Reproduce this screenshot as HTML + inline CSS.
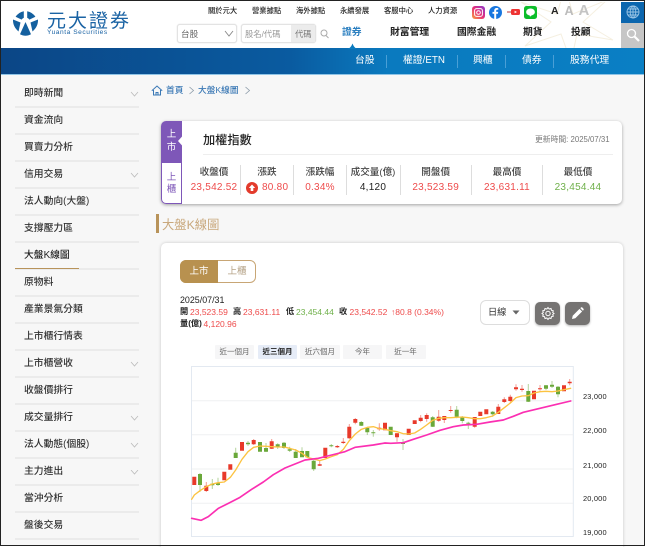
<!DOCTYPE html>
<html lang="zh-Hant">
<head>
<meta charset="utf-8">
<title>大盤K線圖</title>
<style>
html,body{margin:0;padding:0;background:#fff;width:646px;height:547px;overflow:hidden}
body{font-family:"Liberation Sans","Noto Sans CJK TC",sans-serif;color:#333;position:relative}
#p{position:absolute;left:0;top:0;width:646px;height:547px;overflow:hidden}
#p div,#p span.a,#p svg.a{position:absolute;white-space:nowrap}
.t{line-height:12px;transform:translateY(-6px)}
.c{transform:translate(-50%,-6px);line-height:12px;text-align:center}
.top{font-size:7.3px;color:#222;font-weight:500}
.nav{font-size:9.8px;color:#222;font-weight:700}
.sub{font-size:9.8px;color:#fff}
.sep{width:1px;height:13px;top:55px;background:#4a9fd6}
#p .side{font-size:9.8px;color:#333;left:24px;font-weight:500;transform:translateY(-5px)}
.ln{left:15px;width:124px;height:1.5px;background:#ebebeb}
.lab{font-size:9.6px;color:#444;font-weight:500}
.val{font-size:10px;color:#ee4b4b;letter-spacing:.25px}
.cs{width:1px;height:30px;top:165px;background:#ddd}
.m{font-size:8.5px;color:#ee4b4b}
.k{font-size:8.2px;color:#222;font-weight:700}
.rg{top:345px;height:14px;line-height:14px;background:#f6f6f7;text-align:center;font-size:7.5px;color:#666;border-radius:1px}
.ax{font-size:7.4px;color:#222;left:583px;letter-spacing:.2px}
</style>
</head>
<body>
<div id="p">
<div style="left:0;top:0;width:646px;height:48px;background:#fff"></div>
<svg class="a" style="left:515px;top:2px" width="100" height="46" viewBox="0 0 100 46"><path d="M50-15L58 12 92-2 68 20 98 38 62 32 56 60 46 32 10 44 36 20 6 0 42 12Z" fill="none" stroke="#f5efe0" stroke-width="1"/></svg>

<svg class="a" style="left:12px;top:10px" width="27" height="27" viewBox="0 0 27 27">
<path d="M11.8 1.2A12.5 12.5 0 0 0 3.6 6.8L9.6 9.6C10.2 8.8 11 8.2 11.8 7.9Z" fill="#14609f"/>
<path d="M15.2 1.2A12.5 12.5 0 0 1 23.4 6.8L17.4 9.6C16.8 8.8 16 8.2 15.2 7.9Z" fill="#14609f"/>
<path d="M1 9.5L8.5 12.5 6.5 21.5C2.5 18 .8 14 1 9.5Z" fill="#14609f"/>
<path d="M26 9.5L18.5 12.5 20.5 21.5C24.5 18 26.2 14 26 9.5Z" fill="#14609f"/>
<path d="M13.5 12L19 24.2C15.5 26.2 11.5 26.2 8 24.2Z" fill="#14609f"/>
</svg>
<div class="t" style="left:47px;top:20px;font-size:19px;letter-spacing:2px;color:#1a63a4;line-height:22px;transform:translateY(-11px);font-family:'Noto Sans CJK TC',sans-serif;font-weight:400">元大證券</div>
<div class="t" style="left:47px;top:32.500px;font-size:6.600px;color:#1a63a4;letter-spacing:.55px;font-family:'Liberation Sans',sans-serif">Yuanta Securities</div>

<div class="t top" style="left:208px;top:11px">關於元大</div>
<div class="t top" style="left:252px;top:11px">營業據點</div>
<div class="t top" style="left:296px;top:11px">海外據點</div>
<div class="t top" style="left:340px;top:11px">永續發展</div>
<div class="t top" style="left:384px;top:11px">客服中心</div>
<div class="t top" style="left:428px;top:11px">人力資源</div>

<svg class="a" style="left:472px;top:5.500px" width="13" height="13" viewBox="0 0 13 13"><defs><linearGradient id="ig" x1="0" y1="1" x2="1" y2="0"><stop offset="0" stop-color="#f9a13a"/><stop offset=".5" stop-color="#e62f7b"/><stop offset="1" stop-color="#8a3ad0"/></linearGradient></defs><rect width="13" height="13" rx="3" fill="url(#ig)"/><rect x="2.6" y="2.6" width="7.8" height="7.8" rx="2" fill="none" stroke="#fff" stroke-width="1"/><circle cx="6.5" cy="6.5" r="1.8" fill="none" stroke="#fff" stroke-width="1"/></svg>
<svg class="a" style="left:489px;top:5.500px" width="13" height="13" viewBox="0 0 13 13"><circle cx="6.5" cy="6.5" r="6.5" fill="#1877e0"/><path d="M7.2 13V7.8H8.9L9.2 5.9H7.2V4.8C7.2 4.2 7.5 3.8 8.2 3.8H9.3V2.2C8.8 2.1 8.2 2 7.8 2 6.2 2 5.2 3 5.2 4.6V5.9H3.5V7.8H5.2V13Z" fill="#fff"/></svg>
<svg class="a" style="left:507px;top:8px" width="13" height="8" viewBox="0 0 13 8"><rect x="0" y="3" width="5" height="2" fill="#d99"/><rect x="4" y="1" width="9" height="6" rx="1.6" fill="#e33"/><path d="M7.6 2.8L10 4 7.6 5.2Z" fill="#fff"/></svg>
<svg class="a" style="left:524px;top:5.500px" width="13" height="13" viewBox="0 0 13 13"><rect width="13" height="13" rx="2.5" fill="#0cbd2a"/><ellipse cx="6.5" cy="6" rx="4.4" ry="3.5" fill="#fff"/><path d="M5.5 9L6 10.8 8 9Z" fill="#fff"/></svg>
<div class="t" style="left:551px;top:11px;font-size:10.500px;font-weight:700;color:#222">A</div>
<div class="t" style="left:564.500px;top:11px;font-size:12.500px;font-weight:700;color:#bcbcbc">A</div>
<div class="t" style="left:578.500px;top:11px;font-size:15px;font-weight:700;color:#c4c4c4">A</div>

<div style="left:621px;top:2px;width:23px;height:21px;background:#0b66ae"></div>
<svg class="a" style="left:626px;top:5px" width="14" height="14" viewBox="0 0 14 14" fill="none" stroke="#9cc6e6" stroke-width=".9"><circle cx="7" cy="7" r="6"/><ellipse cx="7" cy="7" rx="2.8" ry="6"/><path d="M7 1V13M1 7H13M2 4H12M2 10H12"/></svg>
<div style="left:621px;top:23px;width:23px;height:25px;background:#c6c6c6"></div>
<svg class="a" style="left:626px;top:28px" width="14" height="15" viewBox="0 0 14 15" fill="none" stroke="#fff" stroke-width="1.3"><circle cx="5.5" cy="5.5" r="4"/><path d="M8.5 8.5L13 13" stroke-width="2.2"/></svg>

<div style="left:177px;top:24px;width:60px;height:19px;border:1px solid #e3e3e3;border-radius:3px;box-sizing:border-box;background:#fff;box-shadow:0 0 1px #ccc"></div>
<div class="t" style="left:181px;top:34px;font-size:8.6px;color:#666">台股</div>
<svg class="a" style="left:224px;top:30px" width="10" height="7" viewBox="0 0 10 7"><path d="M1 1L5 6 9 1" fill="none" stroke="#888" stroke-width=".9"/></svg>
<div style="left:241px;top:24px;width:75px;height:19px;border:1px solid #e3e3e3;border-radius:3px;box-sizing:border-box;background:#fff;box-shadow:0 0 1px #ccc"></div>
<div style="left:291px;top:25px;width:24px;height:17px;background:#ececec"></div>
<div class="t" style="left:245px;top:34px;font-size:8.3px;color:#999">股名/代碼</div>
<div class="t" style="left:295px;top:34px;font-size:8.3px;color:#777">代碼</div>
<svg class="a" style="left:320px;top:29px" width="9" height="10" viewBox="0 0 9 10" fill="none" stroke="#aaa"><circle cx="4" cy="4" r="3"/><path d="M6 6.5L8.5 9"/></svg>

<div class="t nav" style="left:342px;top:33px;color:#2b7fc0">證券</div>
<div class="t nav" style="left:390px;top:33px">財富管理</div>
<div class="t nav" style="left:457px;top:33px">國際金融</div>
<div class="t nav" style="left:523px;top:33px">期貨</div>
<div class="t nav" style="left:571px;top:33px">投顧</div>

<div style="left:1px;top:48px;width:644px;height:26px;background:linear-gradient(90deg,#0b4686 0%,#0a5ba0 45%,#0a7abf 60%,#0a7fc4 100%)"></div>
<svg class="a" style="left:346px;top:43px" width="13" height="6" viewBox="0 0 13 6"><path d="M1 6C4 5.5 5.5 3 6.5 .5 7.5 3 9 5.500 12 6Z" fill="#0a7abf"/></svg>
<div style="left:1px;top:74px;width:644px;height:1px;background:#8fc4e6"></div>
<div class="t sub" style="left:355px;top:61px">台股</div><div class="sep" style="left:386px"></div>
<div class="t sub" style="left:403px;top:61px">權證/ETN</div><div class="sep" style="left:457px"></div>
<div class="t sub" style="left:473px;top:61px">興櫃</div><div class="sep" style="left:505px"></div>
<div class="t sub" style="left:522px;top:61px">債券</div><div class="sep" style="left:553px"></div>
<div class="t sub" style="left:570px;top:61px">股務代理</div>

<div style="left:1px;top:75px;width:644px;height:471px;background:#f7f7f7"></div>

<svg class="a" style="left:151px;top:85px" width="12" height="11" viewBox="0 0 12 11" fill="none" stroke="#3a78b5" stroke-width="1"><path d="M.8 5.8L6 1 11.200 5.800M2.500 5V10H9.500V5M5 10V7.500H7V10"/></svg>
<div class="t" style="left:166px;top:90px;font-size:8.7px;color:#3a78b5;font-weight:500">首頁</div>
<svg class="a" style="left:188px;top:86px" width="7" height="9" viewBox="0 0 7 9"><path d="M1.500 1L5.500 4.500 1.500 8" fill="none" stroke="#8a9aa8" stroke-width=".8"/></svg>
<div class="t" style="left:198px;top:90px;font-size:8.7px;color:#3a78b5;font-weight:500">大盤K線圖</div>
<svg class="a" style="left:244px;top:86px" width="7" height="9" viewBox="0 0 7 9"><path d="M1.500 1L5.500 4.500 1.500 8" fill="none" stroke="#8a9aa8" stroke-width=".8"/></svg>

<div class="t side" style="top:93px">即時新聞</div><div class="ln" style="top:106px"></div>
<div class="t side" style="top:120px">資金流向</div><div class="ln" style="top:133px"></div>
<div class="t side" style="top:147px">買賣力分析</div><div class="ln" style="top:160px"></div>
<div class="t side" style="top:174px">信用交易</div><div class="ln" style="top:187px"></div>
<div class="t side" style="top:201px">法人動向(大盤)</div><div class="ln" style="top:214px"></div>
<div class="t side" style="top:228px">支撐壓力區</div><div class="ln" style="top:241px"></div>
<div class="t side" style="top:255px;color:#222">大盤K線圖</div><div class="ln" style="top:268px"></div><div style="left:15px;top:267.500px;width:64px;height:1px;background:#b8935a"></div>
<div class="t side" style="top:282px">原物料</div><div class="ln" style="top:295px"></div>
<div class="t side" style="top:309px">產業景氣分類</div><div class="ln" style="top:322px"></div>
<div class="t side" style="top:336px">上市櫃行情表</div><div class="ln" style="top:349px"></div>
<div class="t side" style="top:363px">上市櫃營收</div><div class="ln" style="top:376px"></div>
<div class="t side" style="top:390px">收盤價排行</div><div class="ln" style="top:403px"></div>
<div class="t side" style="top:417px">成交量排行</div><div class="ln" style="top:430px"></div>
<div class="t side" style="top:444px">法人動態(個股)</div><div class="ln" style="top:457px"></div>
<div class="t side" style="top:471px">主力進出</div><div class="ln" style="top:484px"></div>
<div class="t side" style="top:498px">當沖分析</div><div class="ln" style="top:511px"></div>
<div class="t side" style="top:525px">盤後交易</div><div class="ln" style="top:538px"></div>
<svg class="a" style="left:130px;top:90px" width="9" height="360" viewBox="0 0 9 360" fill="none" stroke="#bbb" stroke-width=".8"><path d="M1 2L4.500 6 8 2M1 83L4.500 87 8 83M1 272L4.500 276 8 272M1 326L4.500 330 8 326M1 353L4.500 357 8 353"/></svg>
<svg class="a" style="left:130px;top:470px" width="9" height="8" viewBox="0 0 9 8" fill="none" stroke="#bbb" stroke-width=".8"><path d="M1 0L4.500 4 8 0"/></svg>

<div style="left:161px;top:121px;width:461px;height:83px;background:#fff;border-radius:5px;box-shadow:0 1px 3px rgba(0,0,0,.35)"></div>
<div style="left:161px;top:121px;width:21px;height:42px;background:#7e57b8;border-radius:5px 0 0 0"></div>
<svg class="a" style="left:178px;top:136px" width="5" height="10" viewBox="0 0 5 10"><path d="M4.500 0V10L0 5Z" fill="#fff"/></svg>
<div style="left:161px;top:163px;width:21px;height:41px;box-sizing:border-box;border:1px solid #7e57b8;border-top:none;border-radius:0 0 0 5px;background:#fff"></div>
<div class="c" style="left:171.500px;top:135px;font-size:9.500px;color:#fff">上</div>
<div class="c" style="left:171.500px;top:148px;font-size:9.500px;color:#fff">市</div>
<div class="c" style="left:171.500px;top:178px;font-size:9.500px;color:#7e57b8">上</div>
<div class="c" style="left:171.500px;top:190px;font-size:9.500px;color:#7e57b8">櫃</div>
<div class="t" style="left:203px;top:140px;font-size:12.200px;color:#222;font-weight:500">加權指數</div>
<div class="t" style="left:535px;top:140px;font-size:7.800px;color:#777">更新時間: 2025/07/31</div>
<div style="left:203px;top:154px;width:410px;height:1px;background:#eee"></div>

<div class="c lab" style="left:214px;top:172.500px">收盤價</div><div class="c val" style="left:214px;top:188px">23,542.52</div>
<div class="cs" style="left:240px"></div>
<div class="c lab" style="left:267px;top:172.500px">漲跌</div>
<svg class="a" style="left:246px;top:182px" width="12" height="12" viewBox="0 0 12 12"><circle cx="6" cy="6" r="6" fill="#e33b2c"/><path d="M6 2.500L9.200 6H7.300V9H4.700V6H2.800Z" fill="#fff"/></svg>
<div class="t val" style="left:262px;top:188px">80.80</div>
<div class="cs" style="left:293px"></div>
<div class="c lab" style="left:320px;top:172.500px">漲跌幅</div><div class="c val" style="left:320px;top:188px">0.34%</div>
<div class="cs" style="left:346px"></div>
<div class="c lab" style="left:373px;top:172.500px">成交量(億)</div><div class="c val" style="left:373px;top:188px;color:#222">4,120</div>
<div class="cs" style="left:400px"></div>
<div class="c lab" style="left:435.700px;top:172.500px">開盤價</div><div class="c val" style="left:435.700px;top:188px">23,523.59</div>
<div class="cs" style="left:471px"></div>
<div class="c lab" style="left:507px;top:172.500px">最高價</div><div class="c val" style="left:507px;top:188px">23,631.11</div>
<div class="cs" style="left:542px"></div>
<div class="c lab" style="left:578px;top:172.500px">最低價</div><div class="c val" style="left:578px;top:188px;color:#6fb04a">23,454.44</div>

<div style="left:156px;top:214px;width:2.500px;height:19px;background:#b8935a"></div>
<div class="t" style="left:162px;top:223.500px;font-size:12.300px;color:#c9a87c;line-height:14px">大盤K線圖</div>

<div style="left:161px;top:243px;width:462px;height:310px;background:#fff;border-radius:5px;box-shadow:0 0 3px rgba(0,0,0,.2)"></div>

<div style="left:180px;top:260px;width:76px;height:23px;box-sizing:border-box;border:1px solid #c8a675;border-radius:6px;background:#fff"></div>
<div style="left:180px;top:260px;width:38px;height:23px;background:#b8914f;border-radius:6px 0 0 6px"></div>
<div class="c" style="left:199px;top:272px;font-size:9.500px;color:#fff">上市</div>
<div class="c" style="left:237px;top:272px;font-size:9.500px;color:#b5a286">上櫃</div>

<div class="t" style="left:180px;top:300px;font-size:8.900px;color:#222">2025/07/31</div>
<div class="t k" style="left:180px;top:312px">開</div><div class="t m" style="left:190px;top:312px">23,523.59</div>
<div class="t k" style="left:233px;top:312px">高</div><div class="t m" style="left:243px;top:312px">23,631.11</div>
<div class="t k" style="left:286px;top:312px">低</div><div class="t m" style="left:296px;top:312px;color:#6fb04a">23,454.44</div>
<div class="t k" style="left:339px;top:312px">收</div><div class="t m" style="left:349.500px;top:312px">23,542.52</div>
<div class="t m" style="left:391px;top:312px">↑80.8 (0.34%)</div>
<div class="t k" style="left:180px;top:324px">量(億)</div><div class="t m" style="left:203.500px;top:324px">4,120.96</div>

<div class="rg" style="left:215px;width:39px">近一個月</div>
<div class="rg" style="left:258px;width:39px;background:#e6ecf7;color:#222;font-weight:700">近三個月</div>
<div class="rg" style="left:300px;width:40px">近六個月</div>
<div class="rg" style="left:343px;width:39px">今年</div>
<div class="rg" style="left:385.500px;width:40px">近一年</div>

<div style="left:480px;top:300px;width:50px;height:25px;box-sizing:border-box;border:1px solid #ddd;border-radius:6px;background:#fff"></div>
<div class="t" style="left:488px;top:312px;font-size:9.200px;color:#333">日線</div>
<svg class="a" style="left:512px;top:310px" width="8" height="5" viewBox="0 0 8 5"><path d="M.5 .5H7.500L4 4.500Z" fill="#666"/></svg>
<div style="left:535px;top:302px;width:25px;height:23px;background:#757372;border-radius:5px;box-shadow:0 1px 2px rgba(0,0,0,.3)"></div>
<svg class="a" style="left:541px;top:306px" width="14" height="15" viewBox="0 0 14 14" fill="none" stroke="#fff" stroke-width="1"><path d="M7 1L8.200 2.500 10 2 10.500 3.800 12.300 4.300 11.700 6 13 7 11.700 8 12.300 9.700 10.500 10.200 10 12 8.200 11.500 7 13 5.800 11.500 4 12 3.500 10.200 1.700 9.700 2.300 8 1 7 2.300 6 1.700 4.300 3.500 3.800 4 2 5.800 2.500Z"/><circle cx="7" cy="7" r="2.200"/></svg>
<div style="left:565px;top:302px;width:25px;height:23px;background:#757372;border-radius:5px;box-shadow:0 1px 2px rgba(0,0,0,.3)"></div>
<svg class="a" style="left:571px;top:307px" width="13" height="13" viewBox="0 0 13 13"><path d="M1 12L1.700 8.700 8.500 1.900 11.100 4.500 4.300 11.300Z M9.300 1.100L10 .5C10.400.2 10.900.2 11.300.5L12.500 1.700C12.800 2.100 12.800 2.600 12.500 3L11.900 3.700Z" fill="#fff"/></svg>

<svg class="a" style="left:0;top:0" width="646" height="547" viewBox="0 0 646 547">
<rect x="191.500" y="366.500" width="381.800" height="170" fill="#fff" stroke="#e3e9f1" stroke-width="1"/>
<path d="M192 400.700H573M192 434.700H573M192 469H573M192 503.300H573" stroke="#eff0f2" stroke-width="1" fill="none"/>
<path fill="none" stroke="#e8392a" stroke-opacity=".5" stroke-width="1" d="M206.300 482V492M253.700 439V445M271.700 439V449M319.700 460V466M337.300 445V448M343.300 438V444M349.300 424V439M355.300 418V424.300M379.300 423.300V430.700M397 433V441.700M420.700 415V422.300M426.700 413.300V421.700M438.700 410V421.700M444.300 416V423M450.700 406V412.700M474.700 417V427.700M498.300 404V414M504.300 397.300V403M510.300 394.700V403.300M516 384.300V390.700M522 385V391.700M540 385V390.700M569.700 379V385.300"/>
<path fill="none" stroke="#6aa83a" stroke-opacity=".5" stroke-width="1" d="M200 473V492M212.300 479V489M218 477.700V486M235.700 447.700V458M248 441V446M266 443V452M277.700 443.300V449M284 442V449M289.700 446.700V452M295.700 449V458M302 447.300V457M307.300 451V458M313.700 460V471M331.300 444V447.300M361.300 421V426M367.300 428V435M373.300 430V436.700M403 439V450M432.700 416V427M456.700 406V418.300M462.300 416V423.300M468.300 421.700V429M492.700 411V416.700M528.300 384V402M546 385V390M552 381V388M558 386V397.300"/>
<path fill="none" stroke="#e8392a" stroke-width="4" d="M194.300 476.700V485M206.300 485.700V491M224.300 471.700V480.300M230.300 464.300V469.700M242 442V450.700M253.700 440V444.300M271.700 441.300V448.700M319.700 464.300V465.700M325.300 447.700V458M337.300 446V447.300M343.300 441.700V443M349.300 426.700V438.300M355.300 419V422.700M379.300 427.700V429.300M385 422.700V430.300M397 433.300V437.300M408.700 428.700V435M414.700 420.300V424M420.700 417.700V421M426.700 415V419M438.700 416.700V420.700M444.300 416V420M450.700 410V411M474.700 417V426.700M480.300 411.700V416M486.300 409.300V414.300M498.300 406.700V414M504.300 399.300V402M510.300 396.700V401M516 387.300V389.300M522 388.700V390M534 390.700V399.300M540 388.300V389.300M564 385.300V391.300M569.700 381.700V383.300"/>
<path fill="none" stroke="#6aa83a" stroke-width="4" d="M200 474V485M212.300 483.700V485.300M218 483.300V485M235.700 452.700V458M248 442.700V444.300M260 442V451.700M266 448V451.700M277.700 444.300V447.300M284 442.700V448M289.700 449.300V450.700M295.700 451.700V458M302 451V457.300M307.300 451V457.300M313.700 460.700V469.300M331.300 445.300V446.300M361.300 422V425.700M367.300 428V432.300M373.300 432.300V433.300M390.700 426.700V435M403 442.700V444M432.700 417.300V426.700M456.700 409.700V416.700M462.300 416.700V421M468.300 422.700V423.700M492.700 411.700V414.300M528.300 391V401.700M546 385.300V388.700M552 384.700V386.700M558 386.700V394.300"/>
<g transform="translate(185,370) scale(.33333)" fill="none" stroke-linejoin="round" stroke-linecap="round">
<polyline stroke="#fcc341" stroke-width="4" points="20,388 28,375 45,362 64,350 82,342 99,338 118,336 136,322 152,300 171,268 189,245 206,232 225,228 243,229 260,230 278,231 297,231 314,235 332,240 351,250 367,262 386,267 404,272 421,267 439,260 457,254 475,238 493,212 511,192 529,178 547,172 565,170 583,176 600,178 617,182 636,185 654,191 671,192 689,189 707,178 725,165 743,151 761,145 778,143 797,143 815,142 832,141 850,143 869,146 886,146 904,143 923,138 940,127 958,113 976,99 993,83 1011,78 1030,77 1047,69 1065,65 1083,64 1101,65 1119,63 1137,59 1157,55"/>
<polyline stroke="#fb2fb2" stroke-width="5" points="20,445 48,451 70,440 100,415 130,400 165,382 200,358 235,336 265,314 300,294 330,282 360,270 400,265 440,255 480,245 510,232 565,225 600,219 617,220 655,218 685,208 725,195 765,181 805,170 835,165 875,163 915,156 955,150 985,139 1015,127 1065,115 1115,103 1157,93"/>
</g>
</svg>
<div class="t ax" style="top:397px">23,000</div>
<div class="t ax" style="top:431px">22,000</div>
<div class="t ax" style="top:465.500px">21,000</div>
<div class="t ax" style="top:499px">20,000</div>
<div class="t ax" style="top:533px">19,000</div>

<div style="left:0;top:0;width:645px;height:546px;box-sizing:border-box;border:1.500px solid #222;pointer-events:none"></div>
</div>
</body>
</html>
